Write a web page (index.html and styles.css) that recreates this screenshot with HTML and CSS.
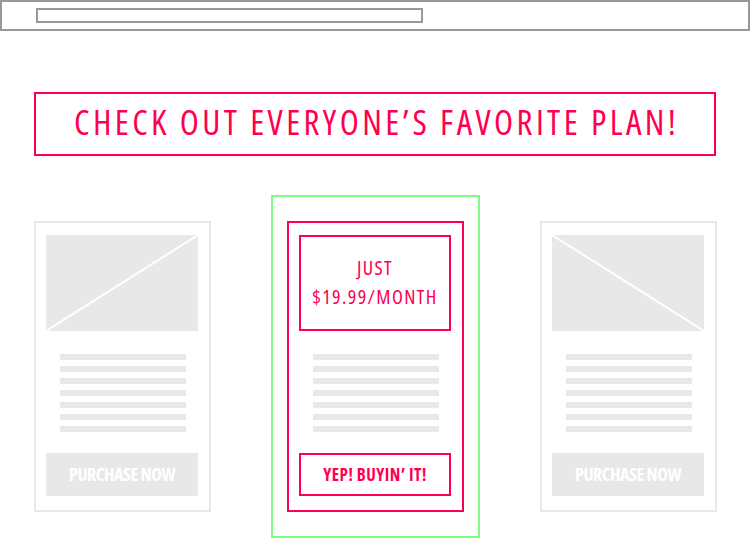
FILE: index.html
```html
<!DOCTYPE html>
<html lang="en">
<head>
    <meta charset="UTF-8">
    <meta name="viewport" content="width=device-width, initial-scale=1.0">
    <title>Pricing - wireframe</title>
    <link rel="stylesheet" href="styles.css">
</head>
<body>
    <div class="browser-bar">
        <div class="url-field"></div>
    </div>

    <h1 class="headline">CHECK OUT EVERYONE’S FAVORITE PLAN!</h1>

    <div class="plans">
        <div class="card">
            <div class="placeholder">
                <svg viewBox="0 0 152 96" preserveAspectRatio="none"><line x1="0" y1="96" x2="152" y2="0"/></svg>
            </div>
            <div class="lines">
                <span></span><span></span><span></span><span></span><span></span><span></span><span></span>
            </div>
            <div class="buy-btn">PURCHASE NOW</div>
        </div>

        <div class="card featured">
            <div class="price">JUST<br>$19.99/MONTH</div>
            <div class="lines">
                <span></span><span></span><span></span><span></span><span></span><span></span><span></span>
            </div>
            <div class="buy-btn">YEP! BUYIN’ IT!</div>
        </div>

        <div class="card">
            <div class="placeholder">
                <svg viewBox="0 0 152 96" preserveAspectRatio="none"><line x1="0" y1="0" x2="152" y2="96"/></svg>
            </div>
            <div class="lines">
                <span></span><span></span><span></span><span></span><span></span><span></span><span></span>
            </div>
            <div class="buy-btn">PURCHASE NOW</div>
        </div>
    </div>
</body>
</html>
```

FILE: styles.css
```css
body {
    margin: 0;
    font-family: 'Open Sans', 'DejaVu Sans Condensed', sans-serif;
    font-stretch: 75%;
    background: #fff;
    width: 750px;
    min-height: 550px;
}
.browser-bar {
    box-sizing: border-box;
    width: 750px;
    height: 31px;
    border: 2px solid #999;
    padding: 6px 0 0 34px;
}
.url-field {
    box-sizing: border-box;
    width: 387px;
    height: 15px;
    border: 2px solid #999;
}
.headline {
    box-sizing: border-box;
    width: 682px;
    height: 64px;
    margin: 61px 0 0 34px;
    border: 2px solid #ff0050;
    color: #ff0050;
    font-size: 35px;
    font-weight: 500;
    letter-spacing: 3.4px;
    text-indent: 3.4px;
    line-height: 55px;
    text-align: center;
}
.plans {
    display: flex;
    gap: 76px;
    margin-top: 65px;
    padding-left: 34px;
}
.card {
    box-sizing: border-box;
    position: relative;
    width: 177px;
    height: 291px;
    border: 2px solid #e8e8e8;
    padding: 12px 11px 14px 10px;
    display: flex;
    flex-direction: column;
}
.placeholder {
    height: 96px;
    background: #e8e8e8;
}
.placeholder svg {
    display: block;
    width: 100%;
    height: 100%;
}
.placeholder line {
    stroke: #fff;
    stroke-width: 2;
}
.lines {
    display: flex;
    flex-direction: column;
    gap: 6px;
    width: 126px;
    margin: 23px 0 0 14px;
}
.lines span {
    display: block;
    height: 6px;
    background: #e8e8e8;
}
.buy-btn {
    margin-top: auto;
    height: 43px;
    background: #e8e8e8;
    color: #fff;
    font-size: 18px;
    font-weight: bold;
    letter-spacing: -0.45px;
    line-height: 43px;
    text-align: center;
}

/* highlighted plan */
.featured {
    border-color: #ff0050;
}
.featured::before {
    content: '';
    position: absolute;
    top: -28px;
    left: -18px;
    right: -18px;
    bottom: -28px;
    border: 2px solid #80fc80;
}
.price {
    box-sizing: border-box;
    height: 96px;
    border: 2px solid #ff0050;
    padding-top: 17px;
    color: #ff0050;
    font-size: 20px;
    font-weight: 500;
    letter-spacing: 1.4px;
    line-height: 28.5px;
    text-align: center;
}
.featured .buy-btn {
    box-sizing: border-box;
    background: #fff;
    border: 2px solid #ff0050;
    color: #ff0050;
    font-size: 17px;
    letter-spacing: 0.5px;
    line-height: 39px;
}
```
